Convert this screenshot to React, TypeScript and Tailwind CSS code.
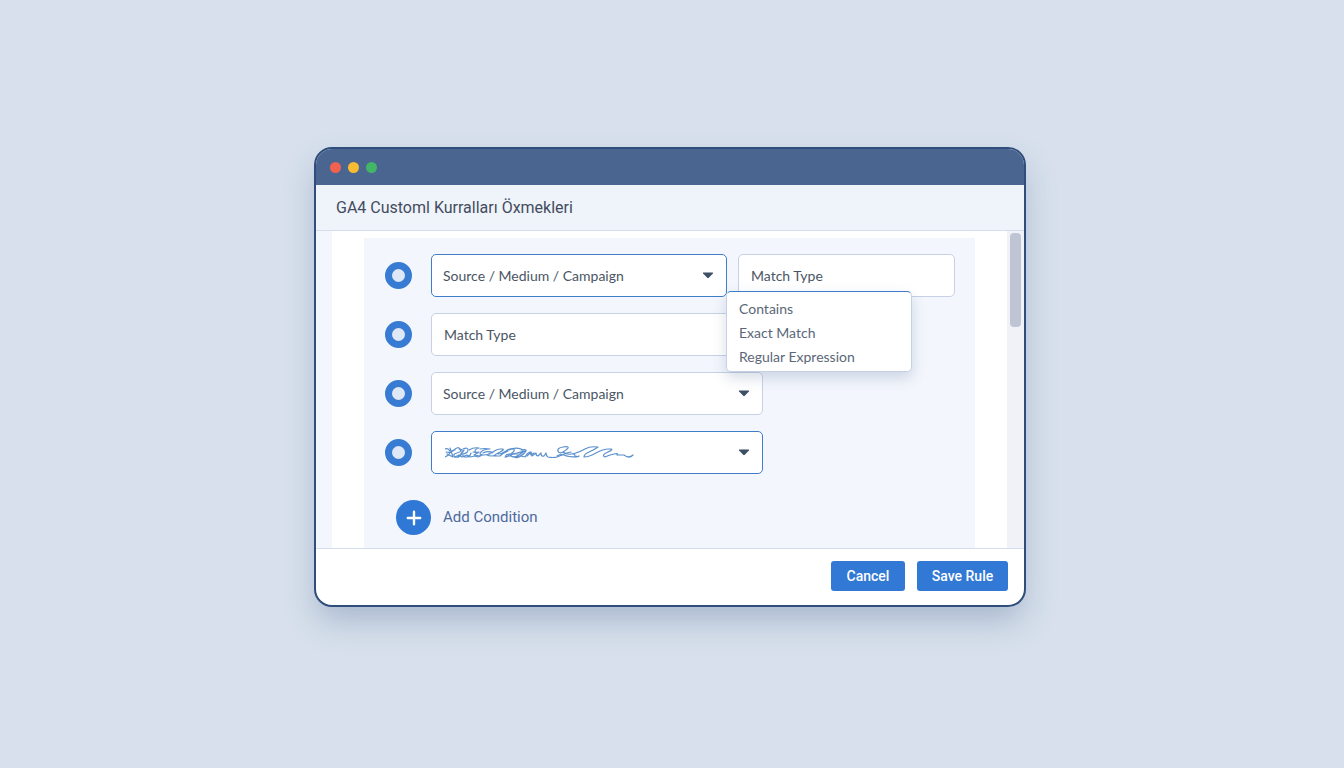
import React, { useState } from 'react';

interface SelectFieldProps {
  label: string;
  options: string[];
  active?: boolean;
  className?: string;
  children?: React.ReactNode;
}

const SelectField: React.FC<SelectFieldProps> = ({ label, options, active, className, children }) => {
  return (
    <div className={`relative h-[43px] ${className ?? ''}`}>
      <select
        aria-label={label}
        className={`h-full w-full appearance-none rounded-[5px] border bg-white pl-[11px] pr-8 text-sm text-[#4a5564] ${
          active ? 'border-[#3f7dc9]' : 'border-[#c6d1e4]'
        }`}>
        {options.map((option) => (
          <option key={option}>{option}</option>
        ))}
      </select>
      {children}
      <svg
        className="pointer-events-none absolute right-[13px] top-[18px] h-[7px] w-3"
        viewBox="0 0 12 7"
        fill="#3d4f63">
        <path d="M1.4 .6h9.2q1 0 .3.8L6.8 5.8q-.8.8-1.6 0L1.1 1.4Q.4.6 1.4.6z" />
      </svg>
    </div>
  );
};

interface MatchFieldProps {
  id: string;
  className?: string;
}

const MatchField: React.FC<MatchFieldProps> = ({ id, className }) => {
  return (
    <input
      id={id}
      type="text"
      aria-label="Match Type"
      defaultValue="Match Type"
      className={`h-[43px] rounded-[5px] border border-[#c6d1e4] bg-white px-3 text-sm text-[#4a5564] ${
        className ?? ''
      }`}
    />
  );
};

const Scribble = () => {
  return (
    <svg
      className="pointer-events-none absolute left-[14px] top-[15px] h-4 w-[192px]"
      viewBox="0 0 192 16"
      fill="none"
      stroke="#5a90cd"
      strokeWidth="1.2"
      strokeLinecap="round"
      strokeLinejoin="round">
      <path d="M0 3q3-1 4 1t5 0M1 6q4 1 7-1M0 11q3-1 5-4t5-3M2 8l6 3M5 2l3 9M9 4q4-4 6-1t-3 4-2 4q4 1 6-2t3-5" />
      <path d="M14 3q4 0 3 3t-4 5M18 3q5-2 5 1t-5 4q-1 3 3 3t5-4M10 11l4-2 3 2 5-2 3 2 5-1 3 1 4-2" />
      <path d="M24 4q5-3 10-2-4 1-4 3t4 1l-5 3 6 1M35 3q5-1 10 0-6 0-9 3t3 3l6-1M28 6l5 1M38 7q4-2 9-1l-5 3q4 2 9 0" />
      <path d="M47 7q4-4 9-4t-1 3-6 4l6 0q3-3 8-5M53 8q4 0 8-3t7-2-1 4-6 4q-1-3 4-3t8 0" />
      <path d="M64 4q6-3 12-1t-4 4-4 4q4 0 6-2t6-4M60 11q5-2 9 0t9-3M76 4q6-1 5 1t-5 5l4 1q2-4 5-5l1 3 3-2" />
      <path d="M82 10l4-4 1 4 4-3q0 3 2 3l3-3q0 4 3 3l2-3q0 3 2 4 5 1 9 0 5-2 7-3t7-2" />
      <path d="M113 5q-1-3 5-4t5 1-5 4-5-1M118 6q4 3 8 2t4 2q3 1 4 0M112 10q4-2 7-1 4 2 13 2" />
      <path d="M128 8q7-2 12-5t13-2q-4 3-9 5t-5 5q5 0 12-4t13-4-1 3-3 5q4-2 9-3 5-1 3 1l7 0q5 4 9 0" />
    </svg>
  );
};

const Bullet: React.FC<{ name: string }> = ({ name }) => {
  return (
    <input
      type="radio"
      name={name}
      aria-label={name}
      defaultChecked
      className="h-[27px] w-[27px] shrink-0 appearance-none rounded-full border-[7px] border-[#377bd2] bg-[#dfe8f6]"
    />
  );
};

const matchTypes = ['Contains', 'Exact Match', 'Regular Expression'];
const sources = ['Source / Medium / Campaign'];

const App = () => {
  const [isOpen, setIsOpen] = useState(true);

  return (
    <main className="flex min-h-screen items-center justify-center bg-[#d7e0ec] pb-[14px] pr-1 font-['Lato','Noto_Sans',sans-serif]">
      <section className="w-full max-w-[712px] overflow-hidden rounded-[18px] border-2 border-[#2f4e7c] bg-white shadow-[0_16px_32px_-4px_rgba(70,100,145,0.34)]">
        <div className="flex h-9 items-center gap-[7px] bg-[#4a658f] px-[14px]">
          <span className="h-[11px] w-[11px] rounded-full bg-[#f0614f]" />
          <span className="h-[11px] w-[11px] rounded-full bg-[#f7bb34]" />
          <span className="h-[11px] w-[11px] rounded-full bg-[#43b567]" />
        </div>
        <header className="flex h-[46px] items-center border-b border-[#d3deee] bg-[#eff3fa] px-5">
          <h1 className="font-['Roboto',sans-serif] text-base text-[#434c5e]">GA4 Customl Kurralları Öxmekleri</h1>
        </header>

        <div className="flex bg-white">
          <div className="w-4 shrink-0 bg-[#f3f6fc]" />
          <div className="min-w-0 flex-1 px-8 pt-[7px]">
            <div className="flex flex-col gap-4 bg-[#f3f6fc] pb-[13px] pl-[21px] pr-5 pt-4">
              <div className="flex items-center">
                <Bullet name="condition-1" />
                <SelectField
                  label="Dimension 1"
                  options={sources}
                  active
                  className="ml-[19px] w-[296px]"
                />
                <div className="relative ml-[11px] flex-1">
                  <MatchField id="match-1" className="w-full" />
                  {isOpen && (
                    <ul className="absolute -left-3 top-[37px] z-10 w-[186px] rounded-[5px] border border-[#c6d1e4] border-t-[#3f7dc9] bg-white pb-[2px] pt-[5px] shadow-[0_6px_14px_rgba(70,100,145,0.22)]">
                      {matchTypes.map((type) => (
                        <li key={type}>
                          <button
                            onClick={() => setIsOpen(false)}
                            className="block h-6 w-full px-3 text-left text-sm leading-6 text-[#5b6778]">
                            {type}
                          </button>
                        </li>
                      ))}
                    </ul>
                  )}
                </div>
              </div>
              <div className="flex items-center">
                <Bullet name="condition-2" />
                <MatchField id="match-2" className="ml-[19px] w-[332px]" />
              </div>
              <div className="flex items-center">
                <Bullet name="condition-3" />
                <SelectField label="Dimension 3" options={sources} className="ml-[19px] w-[332px]" />
              </div>
              <div className="flex items-center">
                <Bullet name="condition-4" />
                <SelectField label="Dimension 4" options={['']} active className="ml-[19px] w-[332px]">
                  <Scribble />
                </SelectField>
              </div>
              <button className="ml-[11px] mt-[10px] flex items-center gap-3 self-start font-['Roboto',sans-serif] text-[15px] text-[#4d6a9e]">
                <span className="flex h-[35px] w-[35px] items-center justify-center rounded-full bg-[#2f78d6]">
                  <svg className="h-4 w-4" viewBox="0 0 16 16" stroke="#fff" strokeWidth="2.4" strokeLinecap="round">
                    <path d="M8 1.8v12.4M1.8 8h12.4" />
                  </svg>
                </span>
                Add Condition
              </button>
            </div>
          </div>
          <div className="w-[17px] shrink-0 bg-[#f0f2f7] px-[3px] pt-[2px]">
            <div className="h-[94px] rounded-[4px] bg-[#bfc5d3]" />
          </div>
        </div>

        <footer className="flex justify-end gap-3 border-t border-[#d3deee] px-4 pb-[14px] pt-3 font-['Roboto',sans-serif] text-sm font-medium text-white">
          <button className="h-[30px] w-[74px] rounded-[3px] bg-[#3279d5]">Cancel</button>
          <button className="h-[30px] w-[91px] rounded-[3px] bg-[#3279d5]">Save Rule</button>
        </footer>
      </section>
    </main>
  );
};

export default App;
